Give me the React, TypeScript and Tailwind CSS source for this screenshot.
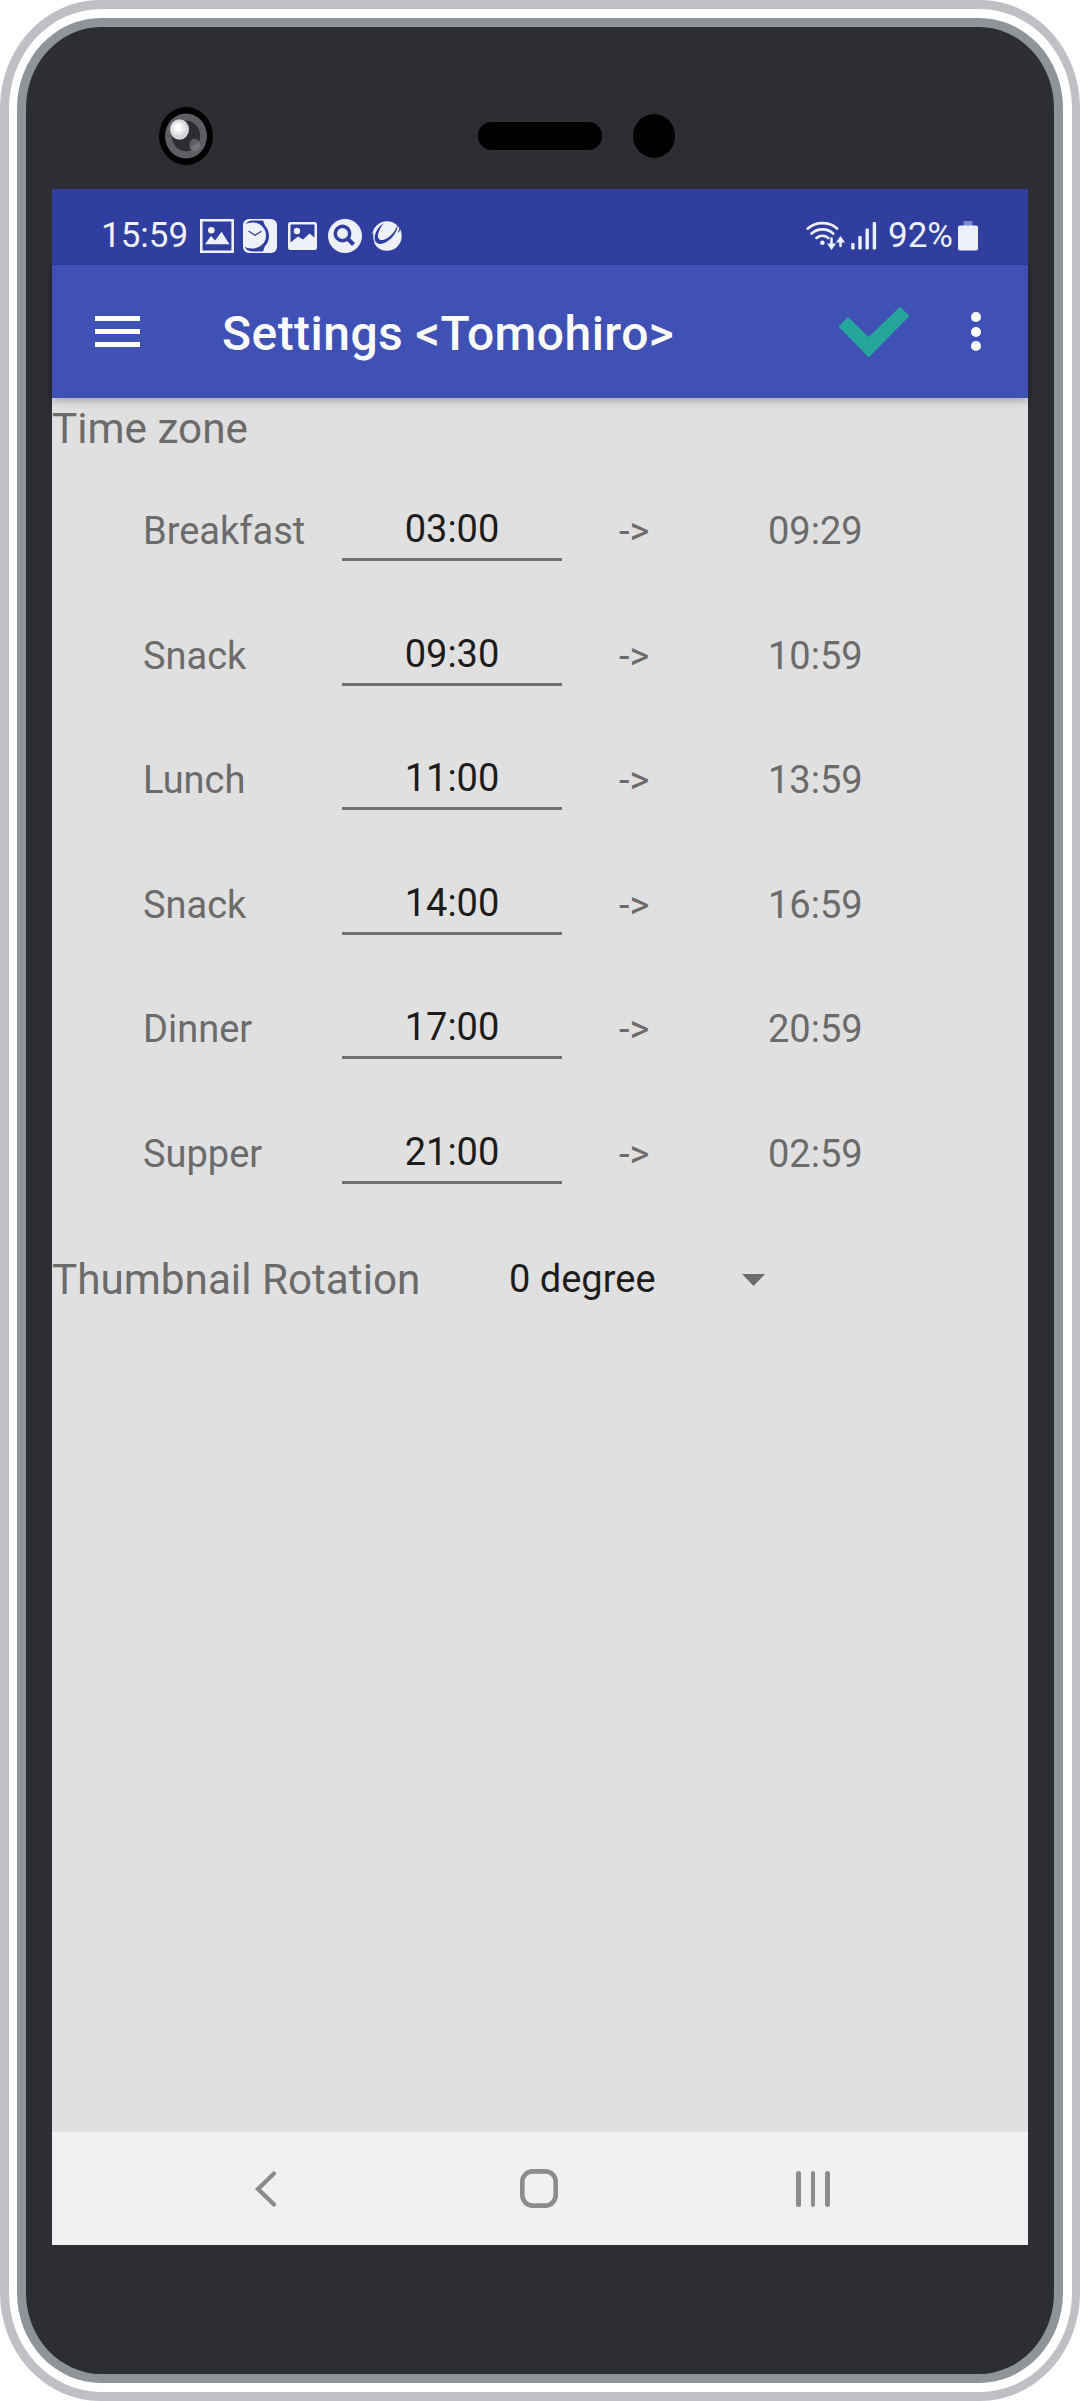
import type { ReactNode } from 'react'

type Meal = {
  id: string
  label: string
  start: string
  end: string
}

const MEALS: Meal[] = [
  { id: 'breakfast', label: 'Breakfast', start: '03:00', end: '09:29' },
  { id: 'snack-am', label: 'Snack', start: '09:30', end: '10:59' },
  { id: 'lunch', label: 'Lunch', start: '11:00', end: '13:59' },
  { id: 'snack-pm', label: 'Snack', start: '14:00', end: '16:59' },
  { id: 'dinner', label: 'Dinner', start: '17:00', end: '20:59' },
  { id: 'supper', label: 'Supper', start: '21:00', end: '02:59' },
]

function PhoneFrame({ children }: { children: ReactNode }) {
  return (
    <div className="h-[2401px] w-[1080px] rounded-[100px/108px] bg-[#bfbfc4] px-[8.5px] py-[9px]">
      <div className="h-full rounded-[92px/99px] bg-white px-[8.5px] py-[9px]">
        <div className="h-full rounded-[84px/90px] bg-[#8f9499] px-[9px] py-[9px]">
          <div className="flex h-full flex-col rounded-[75px/81px] bg-[#2d2e33] px-[26px]">
            <div className="flex h-[162px] shrink-0 items-center pt-14">
              <Camera />
              <div className="ml-[265px] h-7 w-[124px] rounded-[13px/14px] bg-black" />
              <div className="ml-[31px] h-[44px] w-[42px] rounded-[50%] bg-black" />
            </div>
            {children}
          </div>
        </div>
      </div>
    </div>
  )
}

function Camera() {
  return (
    <svg className="ml-[107px] h-[58px] w-[54px] shrink-0" viewBox="0 0 54 58" aria-hidden>
      <ellipse cx="27" cy="29" rx="27" ry="29" fill="#000" />
      <ellipse cx="27" cy="29" rx="21" ry="22.5" fill="#5f5e65" />
      <ellipse cx="27" cy="29" rx="14.2" ry="15.3" fill="#2d2e33" />
      <ellipse cx="36" cy="38.5" rx="5.3" ry="5.8" fill="#75757a" />
      <path d="M31 40.500a5.300 5.800 0 0 1 9.500-5.500z" fill="#5f5e65" />
      <ellipse cx="20.500" cy="22.500" rx="9.500" ry="10.200" fill="#d6d6d8" />
      <ellipse cx="19.500" cy="21.500" rx="7" ry="7" fill="#e9e9ea" />
      <ellipse cx="19" cy="20.500" rx="4" ry="4.200" fill="#fff" />
    </svg>
  )
}

function StatusBar() {
  return (
    <div className="flex h-[76px] shrink-0 items-center bg-[#303e9f] pt-[17px] text-[35px] text-[#eef0fa]">
      <span className="ml-[49px] w-[99px] pt-[2px] whitespace-nowrap">15:59</span>
      <svg className="h-[34px] w-[34px]" viewBox="0 0 34 34" fill="currentColor" aria-hidden>
        <path fillRule="evenodd" d="M0 0h34v34H0zM2.600 2.600v28.800h28.800V2.600z" />
        <circle cx="11.300" cy="11.300" r="3.300" />
        <path d="M5 25.300l6-8.300 4.200 4.500 6.300-8.800 8 12.600z" />
      </svg>
      <svg className="ml-[9px] h-[34px] w-[34px]" viewBox="0 0 34 34" aria-hidden>
        <rect width="34" height="34" rx="6" fill="currentColor" />
        <path d="M2 6Q4 1.500 10 1.500H20l2 5Q26 11 26 17T22 27l-2 5.500H9Q4 32 2 28.500z" fill="#303e9f" />
        <path d="M0 6Q5 3 10.500 3.500A13 13 0 0 1 23 17 13 13 0 0 1 10 29.500Q5 30 0 27z" fill="currentColor" />
        <path d="M5.500 12l6.500 4.300 6.500-4" fill="none" stroke="#303e9f" strokeWidth="1.300" />
      </svg>
      <svg className="ml-[11px] h-[28px] w-[29px]" viewBox="0 0 29 28" aria-hidden>
        <rect width="29" height="28" rx="2.500" fill="currentColor" />
        <path d="M2.500 2.500h24v13l-5-4-6.500 6-5-3-7.500 6z" fill="#303e9f" />
        <circle cx="9" cy="9" r="3.200" fill="currentColor" />
      </svg>
      <svg className="ml-[11px] h-[34px] w-[34px]" viewBox="0 0 34 34" aria-hidden>
        <circle cx="17" cy="17" r="17" fill="currentColor" />
        <circle cx="14.500" cy="14.500" r="7.200" fill="none" stroke="#303e9f" strokeWidth="3.500" />
        <path d="M19.500 19.500l6 6" stroke="#303e9f" strokeWidth="4" />
      </svg>
      <svg className="ml-[10px] h-[30px] w-[30px]" viewBox="0 0 30 30" aria-hidden>
        <circle cx="15" cy="15" r="14.700" fill="currentColor" />
        <g fill="#303e9f">
          <path d="M12 2C5 6.500 1.500 14 3 19.500 5 25 13 23.500 19 17.500 23.500 13 26.500 7 25.500 2.500c-.500 5-4 10-8.500 13.500-5 3.800-9.500 4-10.700 1C5 13.500 8 6.500 12 2z" />
          <path d="M0 14l1.500-2c-.500 4-.200 7 1 9l-.500 2.500L0 21z" />
          <path d="M27.500 3c.500 3-.500 6-2 9l1.500-1c1.500-2.500 2-5 2-8z" />
        </g>
      </svg>

      <svg
        className="ml-auto h-[30px] w-[40px] shrink-0"
        viewBox="0 0 40 30"
        fill="none"
        stroke="currentColor"
        strokeWidth="2.700"
        strokeLinecap="round"
        aria-hidden
      >
        <path d="M1.800 7.500c8-7.300 21.500-7.300 29.200 0M5.700 12.500c6-5.400 15.500-5.400 21.400 0M10.500 17c3.500-2.800 8.300-2.800 11.800 0" />
        <circle cx="16.400" cy="21.700" r="2.300" fill="currentColor" stroke="none" />
        <path d="M25.500 17.500V25M34.500 25v-6" strokeWidth="2.500" />
        <path d="M21 22.500h9L25.500 29zM30 21.500h9L34.500 15z" fill="currentColor" stroke="none" />
      </svg>
      <svg className="ml-[5px] h-[28px] w-[26px] shrink-0" viewBox="0 0 26 28" fill="currentColor" aria-hidden>
        <rect x="0.200" y="21" width="3.400" height="6.500" rx="1" />
        <rect x="7.300" y="14" width="3.400" height="13.500" rx="1" />
        <rect x="14.500" y="6.500" width="3.400" height="21" rx="1" />
        <rect x="21.700" y="0" width="3.400" height="27.500" rx="1" />
      </svg>
      <span className="ml-[11px] w-[70px] pt-[2px] whitespace-nowrap">92%</span>
      <svg className="mr-[50px] h-[30px] w-[20px] shrink-0" viewBox="0 0 20 30" aria-hidden>
        <rect x="5.500" y="0" width="9" height="5" fill="#7f8aca" />
        <rect y="4.500" width="20" height="25" rx="1.800" fill="currentColor" />
      </svg>
    </div>
  )
}

function AppBar() {
  return (
    <header className="z-10 flex h-[133px] shrink-0 items-center bg-[#3f51b5] text-white shadow-[0_3px_8px_rgba(0,0,0,0.25)]">
      <button type="button" aria-label="Open menu" className="ml-[43px] flex w-[45px] flex-col gap-[8px]">
        <span className="h-[5px] bg-white" />
        <span className="h-[5px] bg-white" />
        <span className="h-[5px] bg-white" />
      </button>
      <h1 className="ml-[82px] pt-1 text-[48px] font-medium tracking-[0.45px] whitespace-nowrap">
        Settings &lt;Tomohiro&gt;
      </h1>
      <button type="button" aria-label="Save" className="ml-auto">
        <svg className="block h-[52px] w-[72px]" viewBox="0 0 72 52" aria-hidden>
          <path d="M.500 20.500L10 11 30.700 31 62 .800 71.500 10 30.700 51.500z" fill="#26a69a" />
        </svg>
      </button>
      <button type="button" aria-label="More options" className="mr-[47px] ml-[61px] flex flex-col gap-[4.500px]">
        <span className="size-[10px] rounded-full bg-white" />
        <span className="size-[10px] rounded-full bg-white" />
        <span className="size-[10px] rounded-full bg-white" />
      </button>
    </header>
  )
}

function MealRow({ meal }: { meal: Meal }) {
  return (
    <div className="flex h-[124.5px] items-center pl-[91px] text-[38px] leading-[58px]">
      <span className="w-[199px] pt-px">{meal.label}</span>
      <span className="h-[61px] w-[220px] border-b-[3px] border-[#707070] text-center text-[#1c1c1c]">
        {meal.start}
      </span>
      <span className="ml-[57px] w-[149px] pt-px">-&gt;</span>
      <span className="pt-px">{meal.end}</span>
    </div>
  )
}

function NavBar() {
  return (
    <nav className="flex h-[113px] shrink-0 items-center bg-[#f1f1f1] text-[#8c8c8c]">
      <svg className="ml-[202px] h-[38px] w-[24px]" viewBox="0 0 24 38" fill="none" aria-hidden>
        <path d="M20 3.500L4 19l16 15.500" stroke="currentColor" strokeWidth="4.300" strokeLinecap="round" />
      </svg>
      <svg className="ml-[242px] h-[39px] w-[38px]" viewBox="0 0 38 39" fill="none" aria-hidden>
        <rect x="2.300" y="2.400" width="33.400" height="34.200" rx="10.500" stroke="currentColor" strokeWidth="4.600" />
      </svg>
      <div className="ml-[238px] flex gap-[10px]">
        <span className="h-9 w-[4.500px] rounded-full bg-[#8c8c8c]" />
        <span className="h-9 w-[4.500px] rounded-full bg-[#8c8c8c]" />
        <span className="h-9 w-[4.500px] rounded-full bg-[#8c8c8c]" />
      </div>
    </nav>
  )
}

export default function App() {
  return (
    <div className="w-[1080px] bg-white font-['Roboto',sans-serif]">
      <PhoneFrame>
        <div className="flex h-[2056px] w-[976px] shrink-0 flex-col">
          <StatusBar />
          <AppBar />
          <main className="flex-1 bg-[#e0e0e0] text-[#6b6b6b]">
            <h2 className="mb-[9.25px] h-[61px] text-[42.25px] leading-[61px]">Time zone</h2>
            {MEALS.map((meal) => (
              <MealRow key={meal.id} meal={meal} />
            ))}
            <div className="flex h-[128.5px] items-center">
              <h2 className="w-[457px] text-[42.25px] whitespace-nowrap">Thumbnail Rotation</h2>
              <button type="button" className="flex items-center text-[38px] text-[#1c1c1c]">
                <span className="w-[233px] text-left">0 degree</span>
                <svg className="h-[12px] w-[23px]" viewBox="0 0 23 12" aria-hidden>
                  <path d="M0 0h23L11.500 12z" fill="#6b6b6b" />
                </svg>
              </button>
            </div>
          </main>
          <NavBar />
        </div>
      </PhoneFrame>
    </div>
  )
}
